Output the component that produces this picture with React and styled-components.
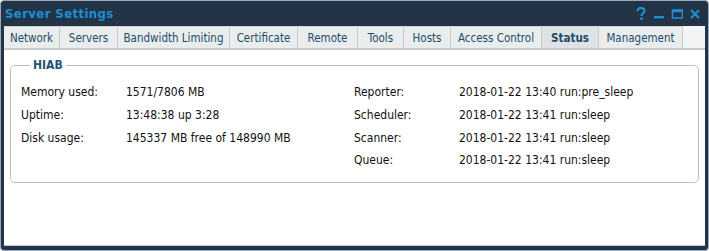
import React from "react";
import styled, { createGlobalStyle } from "styled-components";

const Global = createGlobalStyle`
  html, body { margin: 0; padding: 0; background: #ffffff; }
  body { font-family: "DejaVu Sans Condensed", "DejaVu Sans", sans-serif; }
  * { box-sizing: border-box; }
`;

const Window = styled.div`
  width: 709px;
  height: 251px;
  background: #223446;
  border: 1px solid #9aa8bc;
  border-radius: 4px;
  padding: 0 3px 4px 3px;
  display: flex;
  flex-direction: column;
`;

const TitleBar = styled.div`
  height: 25px;
  display: flex;
  align-items: center;
  justify-content: space-between;
  padding: 0 4px 0 1px;
`;

const Title = styled.div`
  color: #1b8fd6;
  font-weight: bold;
  font-size: 13px;
  letter-spacing: 0.4px;
`;

const Controls = styled.div`
  display: flex;
  align-items: center;
  gap: 6px;
`;

const Ctrl = styled.svg`
  display: block;
`;

const Body = styled.div`
  flex: 1;
  background: #ffffff;
  display: flex;
  flex-direction: column;
  border-bottom: 1px solid #c4c8cc;
`;

const TabStrip = styled.div`
  height: 24px;
  display: flex;
  align-items: flex-end;
  background: #f2f3f3;
  border-bottom: 2px solid #c8cbcd;
`;

const Tab = styled.div`
  height: 22px;
  display: flex;
  align-items: center;
  justify-content: center;
  width: ${(p) => p.w}px;
  background: ${(p) => (p.active ? "#dfe3e5" : "#e9eded")};
  border-right: 1px solid #c9cccd;
  border-top: 1px solid #d2d5d6;
  color: #1d4c69;
  font-size: 11.5px;
  font-weight: ${(p) => (p.active ? "bold" : "normal")};
`;

const Content = styled.div`
  padding: 8px 6px 0 6px;
`;

const Fieldset = styled.fieldset`
  margin: 0;
  border: 1px solid #b9bccb;
  border-radius: 5px;
  padding: 9px 0 10px 10px;
  display: grid;
  grid-template-columns: 333px 1fr;
`;

const Legend = styled.legend`
  margin-left: 9px;
  padding: 0 3px;
  color: #1f5579;
  font-weight: bold;
  font-size: 12px;
`;

const Column = styled.div`
  display: flex;
  flex-direction: column;
`;

const Row = styled.div`
  height: 22.7px;
  display: flex;
  align-items: center;
  font-size: 12px;
  color: #111;
`;

const Label = styled.span`
  width: 105px;
  flex: none;
`;

const Value = styled.span``;

const tabs = [
  ["Network", 56],
  ["Servers", 58],
  ["Bandwidth Limiting", 112],
  ["Certificate", 68],
  ["Remote", 60],
  ["Tools", 46],
  ["Hosts", 47],
  ["Access Control", 91],
  ["Status", 57, true],
  ["Management", 84],
];

const left = [
  ["Memory used:", "1571/7806 MB"],
  ["Uptime:", "13:48:38 up 3:28"],
  ["Disk usage:", "145337 MB free of 148990 MB"],
];
const right = [
  ["Reporter:", "2018-01-22 13:40 run:pre_sleep"],
  ["Scheduler:", "2018-01-22 13:41 run:sleep"],
  ["Scanner:", "2018-01-22 13:41 run:sleep"],
  ["Queue:", "2018-01-22 13:41 run:sleep"],
];

const C = "#1b8fd6";

export default function App() {
  return (
    <>
      <Global />
      <Window>
        <TitleBar>
          <Title>Server Settings</Title>
          <Controls>
            <Ctrl width="12" height="14" viewBox="0 0 12 14">
              <path d="M2.5 4.2 C2.5 1.8 4.2 1 6 1 C8 1 9.5 2.2 9.5 4 C9.5 6 7.2 6.3 6.6 8 L6.6 9" fill="none" stroke={C} strokeWidth="2.2" />
              <rect x="5.4" y="10.6" width="2.4" height="2.4" fill={C} />
            </Ctrl>
            <Ctrl width="12" height="14" viewBox="0 0 12 14">
              <rect x="1" y="9" width="10" height="2.4" fill={C} />
            </Ctrl>
            <Ctrl width="12" height="14" viewBox="0 0 12 14">
              <rect x="1.5" y="3" width="10" height="8" fill="none" stroke={C} strokeWidth="1.6" />
              <rect x="1.5" y="3" width="10" height="2.2" fill={C} />
            </Ctrl>
            <Ctrl width="12" height="14" viewBox="0 0 12 14">
              <path d="M2 3 L10 11 M10 3 L2 11" stroke={C} strokeWidth="2.2" />
            </Ctrl>
          </Controls>
        </TitleBar>
        <Body>
          <TabStrip>
            {tabs.map(([t, w, a]) => (
              <Tab key={t} w={w} active={a}>
                {t}
              </Tab>
            ))}
          </TabStrip>
          <Content>
            <Fieldset>
              <Legend>HIAB</Legend>
              <Column>
                {left.map(([l, v]) => (
                  <Row key={l}>
                    <Label>{l}</Label>
                    <Value>{v}</Value>
                  </Row>
                ))}
              </Column>
              <Column>
                {right.map(([l, v]) => (
                  <Row key={l}>
                    <Label>{l}</Label>
                    <Value>{v}</Value>
                  </Row>
                ))}
              </Column>
            </Fieldset>
          </Content>
        </Body>
      </Window>
    </>
  );
}
